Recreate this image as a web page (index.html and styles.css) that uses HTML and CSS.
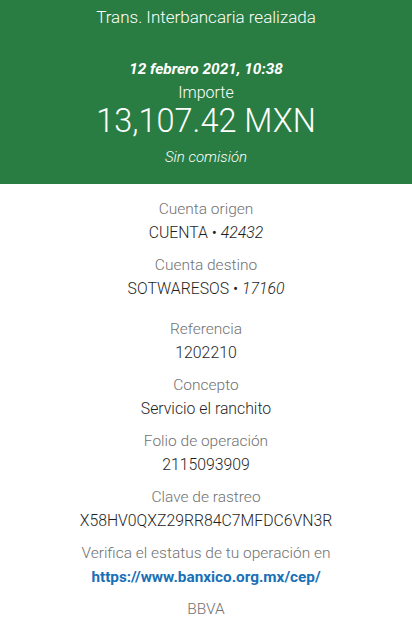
FILE: index.html
```html
<!DOCTYPE html>
<html lang="es">
<head>
<meta charset="utf-8">
<link rel="stylesheet" href="styles.css">
</head>
<body>
<header class="hero">
  <div class="hero-title">Trans. Interbancaria realizada</div>
  <div class="hero-date">12 febrero 2021, 10:38</div>
  <div class="hero-label">Importe</div>
  <div class="hero-amount">13,107.42 MXN</div>
  <div class="hero-note">Sin comisión</div>
</header>
<main class="details">
  <section class="group">
    <div class="item">
      <div class="label">Cuenta origen</div>
      <div class="value">CUENTA • <em>42432</em></div>
    </div>
    <div class="item">
      <div class="label">Cuenta destino</div>
      <div class="value">SOTWARESOS • <em>17160</em></div>
    </div>
  </section>
  <section class="group">
    <div class="item">
      <div class="label">Referencia</div>
      <div class="value">1202210</div>
    </div>
    <div class="item">
      <div class="label">Concepto</div>
      <div class="value">Servicio el ranchito</div>
    </div>
    <div class="item">
      <div class="label">Folio de operación</div>
      <div class="value">2115093909</div>
    </div>
    <div class="item">
      <div class="label">Clave de rastreo</div>
      <div class="value">X58HV0QXZ29RR84C7MFDC6VN3R</div>
    </div>
    <div class="item">
      <div class="label">Verifica el estatus de tu operación en</div>
      <a class="link" href="#">https://www.banxico.org.mx/cep/</a>
    </div>
    <div class="item">
      <div class="label">BBVA</div>
    </div>
  </section>
</main>
</body>
</html>
```
FILE: styles.css
```css
* { box-sizing: border-box; }
html, body { margin: 0; padding: 0; }
body {
  width: 412px;
  height: 624px;
  overflow: hidden;
  background: #ffffff;
  font-family: Roboto, "Liberation Sans", sans-serif;
  text-align: center;
}
.hero {
  background: #297d42;
  color: #ffffff;
  padding: 5px 0 15px;
  display: flex;
  flex-direction: column;
}
.hero-title {
  font-size: 17px;
  line-height: 24px;
  font-weight: 300;
  margin-bottom: 28px;
}
.hero-date {
  font-size: 15.4px;
  line-height: 24px;
  font-weight: 700;
  font-style: italic;
}
.hero-label {
  font-size: 16px;
  line-height: 24px;
  font-weight: 300;
}
.hero-amount {
  font-size: 32.5px;
  line-height: 32px;
  font-weight: 300;
  margin-bottom: 8px;
}
.hero-note {
  font-size: 15px;
  line-height: 24px;
  font-style: italic;
  font-weight: 300;
}
.details {
  padding-top: 13px;
  display: flex;
  flex-direction: column;
  gap: 16px;
}
.group {
  display: flex;
  flex-direction: column;
  gap: 8px;
}
.item {
  display: flex;
  flex-direction: column;
  align-items: center;
}
.label {
  font-size: 15.5px;
  line-height: 24px;
  color: #727272;
  font-weight: 300;
}
.value {
  font-size: 15.8px;
  line-height: 24px;
  color: #1f1f1f;
  font-weight: 300;
}
.value em { font-style: italic; }
.link {
  font-size: 15.3px;
  line-height: 24px;
  color: #1a70b6;
  font-weight: 700;
  text-decoration: none;
}
```
